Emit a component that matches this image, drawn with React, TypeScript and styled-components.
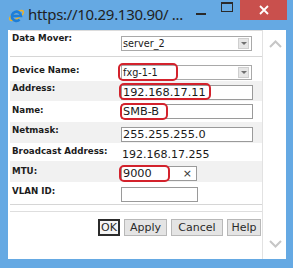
import React from 'react';
import styled, { createGlobalStyle } from 'styled-components';

const GlobalStyle = createGlobalStyle`
  html, body { margin: 0; padding: 0; }
  body { width: 293px; height: 268px; overflow: hidden; background: #65a9e3; }
`;

const Window = styled.div`
  width: 293px;
  height: 268px;
  box-sizing: border-box;
  background: #65a9e3;
  display: flex;
  flex-direction: column;
`;

const TitleBar = styled.div`
  height: 30px;
  flex: none;
  display: flex;
  align-items: flex-start;
  padding-left: 8px;
  padding-right: 6px;
`;

const TitleIcon = styled.svg`
  margin-top: 7px;
  flex: none;
`;

const TitleText = styled.div`
  margin-left: 3px;
  margin-top: 4px;
  font-family: 'Noto Sans', 'Open Sans', sans-serif;
  font-size: 15px;
  letter-spacing: -0.3px;
  line-height: 20px;
  color: #1f1f1f;
  white-space: nowrap;
  flex: 1;
`;

const CaptionButton = styled.div<{ $w: number; $close?: boolean }>`
  width: ${(p) => p.$w}px;
  height: 20px;
  flex: none;
  display: flex;
  align-items: center;
  justify-content: center;
  background: ${(p) => (p.$close ? '#c9504d' : 'transparent')};
`;

const MinGlyph = styled.div`
  width: 10px;
  height: 2px;
  background: #2a2a2a;
  margin-top: 8px;
`;

const MaxGlyph = styled.div`
  width: 10px;
  height: 7px;
  border: 1px solid #2a2a2a;
  border-top-width: 2px;
  margin-top: -6px;
`;

const Client = styled.div`
  height: 229px;
  margin: 0 7px 0 8px;
  background: #ffffff;
  display: flex;
`;

const Form = styled.div`
  width: 253px;
  margin-left: 2px;
  box-sizing: border-box;
  border-top: 1px solid #dcdcdc;
  border-right: 1px solid #e2e2e2;
  display: flex;
  flex-direction: column;
`;

const Row = styled.div<{ $h: number; $shade?: boolean; $line?: boolean }>`
  height: ${(p) => p.$h}px;
  box-sizing: border-box;
  display: grid;
  grid-template-columns: 111px 1fr;
  align-items: start;
  background: ${(p) => (p.$shade ? '#f1f1f1' : 'transparent')};
  border-bottom: ${(p) => (p.$line ? '1px solid #d6d6d6' : 'none')};
`;

const Label = styled.div<{ $pt: number }>`
  padding: ${(p) => p.$pt}px 0 0 2px;
  font-family: 'DejaVu Sans', Verdana, sans-serif;
  font-weight: bold;
  font-size: 8.7px;
  line-height: 11px;
  color: #1c1c1c;
  white-space: nowrap;
`;

const Field = styled.div<{ $pt: number }>`
  padding-top: ${(p) => p.$pt}px;
  position: relative;
  display: flex;
`;

const Select = styled.div`
  position: relative;
  width: 131px;
  height: 15px;
  box-sizing: border-box;
  border: 1px solid #a9a9a9;
  background: #fff;
  display: flex;
  align-items: center;
  padding-left: 1px;
  font-family: 'DejaVu Sans', Verdana, sans-serif;
  font-size: 9.7px;
  color: #1a1a1a;
`;

const SelectArrow = styled.div`
  position: absolute;
  right: 2px;
  top: 1px;
  width: 11px;
  height: 11px;
  box-sizing: border-box;
  background: #e6e6e6;
  border: 1px solid #cfcfcf;
  display: flex;
  align-items: center;
  justify-content: center;
  &::after {
    content: '';
    border-left: 3px solid transparent;
    border-right: 3px solid transparent;
    border-top: 3px solid #707070;
  }
`;

const TextBox = styled.div<{ $w: number }>`
  position: relative;
  width: ${(p) => p.$w}px;
  height: 15px;
  box-sizing: border-box;
  border: 1px solid #9a9a9a;
  background: #fff;
  display: flex;
  align-items: center;
  padding-left: 1px;
  font-family: 'DejaVu Sans', Verdana, sans-serif;
  font-size: 11.3px;
  color: #1a1a1a;
`;

const ClearMark = styled.span`
  position: absolute;
  right: 4px;
  top: 0;
  line-height: 13px;
  font-size: 11px;
  color: #333;
`;

const Value = styled.div`
  font-family: 'DejaVu Sans', Verdana, sans-serif;
  font-size: 11px;
  line-height: 13px;
  color: #1a1a1a;
  padding-left: 1px;
`;

const Mark = styled.div<{ $x: number; $y: number; $w: number; $h: number }>`
  position: absolute;
  left: ${(p) => p.$x}px;
  top: ${(p) => p.$y}px;
  width: ${(p) => p.$w}px;
  height: ${(p) => p.$h}px;
  box-sizing: border-box;
  border: 2px solid #d3222c;
  border-radius: 5px;
  pointer-events: none;
`;

const Footer = styled.div`
  margin-top: 6px;
  border-top: 1px solid #dedede;
  padding-top: 7px;
  display: flex;
  justify-content: flex-end;
  gap: 4px;
  padding-right: 1px;
`;

const Button = styled.div<{ $w: number; $focus?: boolean }>`
  width: ${(p) => p.$w}px;
  height: 17px;
  box-sizing: border-box;
  border: ${(p) => (p.$focus ? '2px solid #2b2b2b' : '1px solid #b8b8b8')};
  background: ${(p) => (p.$focus ? '#f4f4f4' : '#e4e4e4')};
  display: flex;
  align-items: center;
  justify-content: center;
  font-family: 'DejaVu Sans', Verdana, sans-serif;
  font-size: 11px;
  color: #2a2a2a;
`;

const Scroll = styled.div`
  flex: 1;
  display: flex;
  flex-direction: column;
  justify-content: space-between;
  align-items: center;
  padding: 10px 0 11px 1px;
`;

const Chevron = ({ up }: { up?: boolean }) => (
  <svg width="13" height="8" viewBox="0 0 13 8">
    <path
      d={up ? 'M1 7 L6.5 1.5 L12 7' : 'M1 1 L6.5 6.5 L12 1'}
      stroke="#c6c6c6"
      strokeWidth="2"
      fill="none"
    />
  </svg>
);

const IeLogo = () => (
  <TitleIcon width="17" height="16" viewBox="0 0 17 16">
    <ellipse
      cx="8.5"
      cy="8.5"
      rx="8"
      ry="3.2"
      transform="rotate(-32 8.5 8.5)"
      stroke="#f0b323"
      strokeWidth="1.4"
      fill="none"
    />
    <path
      d="M4.2 9 H13 A4.6 4.6 0 1 0 11.6 12.6"
      stroke="#1d7ed8"
      strokeWidth="2.6"
      fill="none"
    />
  </TitleIcon>
);

const App = () => (
  <Window>
    <GlobalStyle />
    <TitleBar>
      <IeLogo />
      <TitleText>https://10.29.130.90/ ...</TitleText>
      <CaptionButton $w={26}>
        <MinGlyph />
      </CaptionButton>
      <CaptionButton $w={26}>
        <MaxGlyph />
      </CaptionButton>
      <CaptionButton $w={47} $close>
        <svg width="10" height="10" viewBox="0 0 10 10">
          <path d="M1 1 L9 9 M9 1 L1 9" stroke="#fff" strokeWidth="1.8" />
        </svg>
      </CaptionButton>
    </TitleBar>
    <Client>
      <Form>
        <Row $h={26} $line>
          <Label $pt={2}>Data Mover:</Label>
          <Field $pt={5}>
            <Select>
              server_2
              <SelectArrow />
            </Select>
          </Field>
        </Row>
        <Row $h={24}>
          <Label $pt={8}>Device Name:</Label>
          <Field $pt={8}>
            <Select>
              fxg-1-1
              <SelectArrow />
            </Select>
            <Mark $x={-3} $y={6} $w={60} $h={18} />
          </Field>
        </Row>
        <Row $h={20} $shade>
          <Label $pt={2}>Address:</Label>
          <Field $pt={4}>
            <TextBox $w={132}>192.168.17.11</TextBox>
            <Mark $x={-2} $y={2} $w={92} $h={17} />
          </Field>
        </Row>
        <Row $h={21}>
          <Label $pt={4}>Name:</Label>
          <Field $pt={3}>
            <TextBox $w={132}>SMB-B</TextBox>
            <Mark $x={-1} $y={2} $w={48} $h={17} />
          </Field>
        </Row>
        <Row $h={21} $shade>
          <Label $pt={3}>Netmask:</Label>
          <Field $pt={5}>
            <TextBox $w={132}>255.255.255.0</TextBox>
          </Field>
        </Row>
        <Row $h={18}>
          <Label $pt={3}>Broadcast Address:</Label>
          <Field $pt={5}>
            <Value>192.168.17.255</Value>
          </Field>
        </Row>
        <Row $h={21} $shade>
          <Label $pt={5}>MTU:</Label>
          <Field $pt={5}>
            <TextBox $w={76}>
              9000
              <ClearMark>×</ClearMark>
            </TextBox>
            <Mark $x={-2} $y={4} $w={51} $h={17} />
          </Field>
        </Row>
        <Row $h={23} $line>
          <Label $pt={4}>VLAN ID:</Label>
          <Field $pt={5}>
            <TextBox $w={77} />
          </Field>
        </Row>
        <Footer>
          <Button $w={22} $focus>OK</Button>
          <Button $w={43}>Apply</Button>
          <Button $w={52}>Cancel</Button>
          <Button $w={34}>Help</Button>
        </Footer>
      </Form>
      <Scroll>
        <Chevron up />
        <Chevron />
      </Scroll>
    </Client>
  </Window>
);

export default App;
